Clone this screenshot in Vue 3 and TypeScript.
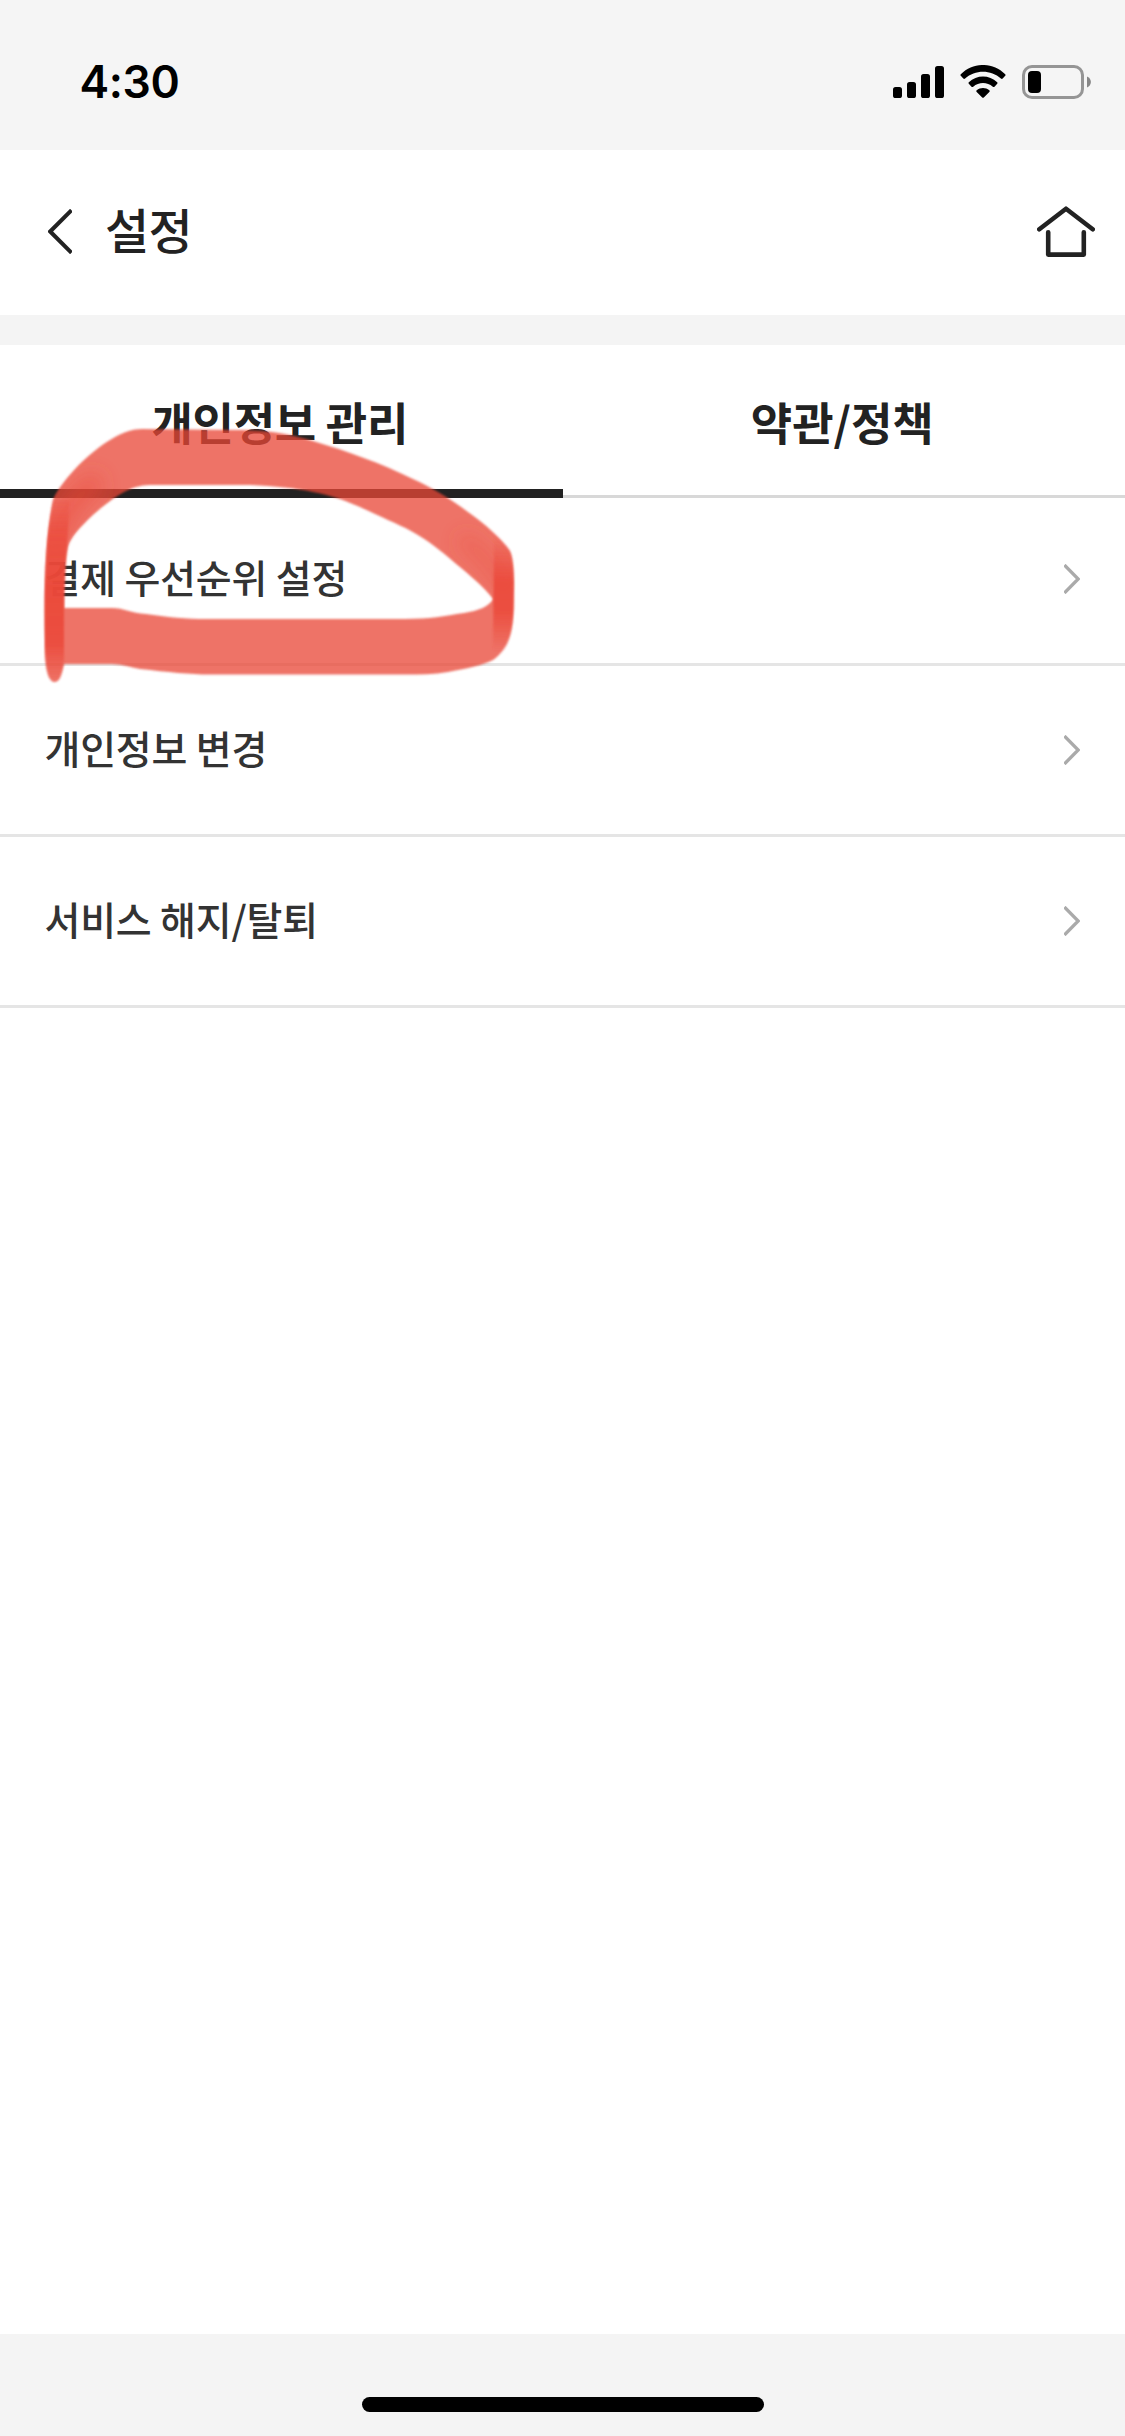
<script setup lang="ts">
import { ref } from 'vue'

interface Tab { id: number; label: string }

const tabs: Tab[] = [
  { id: 0, label: '개인정보 관리' },
  { id: 1, label: '약관/정책' },
]
const active = ref(0)
const items: string[] = ['결제 우선순위 설정', '개인정보 변경', '서비스 해지/탈퇴']

// Outline of the marker loop: outer edge, then the hole.
const loop =
  'M53 500C56 491 70 473 84 460C104 442 124 429 142 429L235 430C270 430 289 434 313 441C350 452 380 463 413 479C435 489 452 500 468 512C486 525 500 537 510 551C515 562 513.5 585 513.5 600C513.5 630 510 648 493 660C484 665 465 669 448 672C434 674.5 420 674.5 405 674.5H210C190 674.5 168 672 140 669C130 667 120 664 112 664H64C61 676 60 682 54 682C46 680 45 660 45 640C44 580 46 535 53 500Z' +
  'M64 608H112C124 608 131 613 146 614C166 617 188 619 205 619H405C430 619 444 616 464 613C478 611 490 606 493 599C484 587 472 577 455 563C441 551 429 541 411 531C396 523 383 518 360 507C331 494 300 487 250 485H150C131 485 115 496 94 514C80 527 70 538 68 547C64 562 64 586 64 608Z'
</script>

<template>
  <div class="screen">
    <div class="status">
      <span class="time">4:30</span>
      <div class="indicators">
        <svg class="signal" width="51" height="32" viewBox="0 0 51 32">
          <rect x="0" y="21" width="9" height="11" rx="2.6" />
          <rect x="14" y="16" width="9" height="16" rx="2.6" />
          <rect x="28" y="8" width="9" height="24" rx="2.6" />
          <rect x="42" y="0" width="9" height="32" rx="2.6" />
        </svg>
        <svg class="wifi" width="46" height="33" viewBox="0 0 46 33">
          <path d="M.8 9.2Q0 10 .8 10.8L3.3 13.6Q4.2 14.5 5.1 13.6C15 4.6 31 4.6 40.9 13.6Q41.8 14.5 42.7 13.6L45.2 10.8Q46 10 45.2 9.2C32.8-3.1 13.2-3.1.8 9.2Z" />
          <path d="M8.8 17.2Q8 18 8.8 18.8L11.5 21.7Q12.3 22.5 13.2 21.7C18.8 16.8 27.2 16.8 32.8 21.7Q33.7 22.5 34.5 21.7L37.2 18.8Q38 18 37.2 17.2C29.2 9.7 16.8 9.7 8.8 17.2Z" />
          <path d="M16.7 25.2Q15.8 26 16.7 26.9L22.2 32.4Q23 33.2 23.8 32.4L29.3 26.9Q30.2 26 29.3 25.2C25.7 22.3 20.3 22.3 16.7 25.2Z" />
        </svg>
        <svg class="battery" width="69" height="34" viewBox="0 0 69 34">
          <rect x="1.5" y="1.5" width="59" height="31" rx="8.5" fill="none" stroke="#959595" stroke-width="3" />
          <rect x="6" y="6" width="13" height="22" rx="4" />
          <path d="M65 11.5C70.2 13.8 70.2 20.2 65 22.5Z" fill="#878787" />
        </svg>
      </div>
    </div>

    <header class="header">
      <svg class="back" width="24" height="45" viewBox="0 0 24 45">
        <path d="M23.5 1.2L2.2 22.5L23.5 43.8" fill="none" stroke="#222" stroke-width="4" />
      </svg>
      <h1 class="title">설정</h1>
      <svg class="home" width="58" height="51" viewBox="0 0 58 51">
        <g fill="none" stroke="#222" stroke-width="4.6" stroke-linecap="round" stroke-linejoin="round">
          <path d="M2.3 23.3L29 2.7L55.7 23.3" />
          <path d="M11.2 26.2V48.6H46.8V26.2" />
        </g>
      </svg>
    </header>

    <div class="divider"></div>

    <nav class="tabs">
      <button
        v-for="tab in tabs"
        :key="tab.id"
        class="tab"
        :class="{ active: active === tab.id }"
        @click="active = tab.id"
      >
        {{ tab.label }}
      </button>
    </nav>

    <main class="list">
      <a v-for="item in items" :key="item" class="row">
        <span class="label">{{ item }}</span>
        <svg class="chevron" width="16" height="30" viewBox="0 0 16 30">
          <path d="M.4 1L14.2 15L.4 29" fill="none" stroke="#aaa" stroke-width="3.3" />
        </svg>
      </a>
    </main>

    <footer class="footer"><div class="home-bar"></div></footer>

    <!-- Hand-drawn marker loop over the first entry -->
    <svg class="marker" width="500" height="280" viewBox="30 415 500 280">
      <defs>
        <filter id="soft" x="-10%" y="-5%" width="120%" height="110%">
          <feGaussianBlur stdDeviation="1.3" />
        </filter>
        <filter id="smudge" x="-80%" y="-80%" width="260%" height="260%">
          <feGaussianBlur stdDeviation="10" />
        </filter>
        <linearGradient id="left" x1="0" y1="490" x2="0" y2="683" gradientUnits="userSpaceOnUse">
          <stop offset="0" stop-color="#eb4839" stop-opacity="0" />
          <stop offset=".25" stop-color="#eb4839" stop-opacity=".75" />
          <stop offset=".5" stop-color="#eb4839" stop-opacity=".92" />
          <stop offset=".8" stop-color="#eb4839" stop-opacity=".85" />
          <stop offset="1" stop-color="#eb4839" stop-opacity="0" />
        </linearGradient>
        <linearGradient id="right" x1="0" y1="535" x2="0" y2="652" gradientUnits="userSpaceOnUse">
          <stop offset="0" stop-color="#eb4839" stop-opacity="0" />
          <stop offset=".4" stop-color="#eb4839" stop-opacity=".85" />
          <stop offset=".65" stop-color="#eb4839" stop-opacity=".85" />
          <stop offset="1" stop-color="#eb4839" stop-opacity="0" />
        </linearGradient>
        <clipPath id="loop"><path clip-rule="evenodd" :d="loop" /></clipPath>
      </defs>
      <path filter="url(#soft)" fill="#e94838" fill-opacity=".755" fill-rule="evenodd" :d="loop" />
      <g clip-path="url(#loop)">
        <path filter="url(#smudge)" fill="none" stroke="#eb4839" stroke-opacity=".5" stroke-width="20" d="M54 545C62 515 78 492 100 480" />
        <path filter="url(#smudge)" fill="none" stroke="#eb4839" stroke-opacity=".4" stroke-width="14" d="M460 538C480 550 494 566 508 592" />
      </g>
      <path filter="url(#soft)" fill="url(#left)" d="M53 500L69 500C69 535 64 570 64 608V660C62 676 60 682 54 682C46 680 45 660 45 640C44 580 46 535 53 500Z" />
      <path filter="url(#soft)" fill="url(#right)" d="M494 535L508 548C515 560 513.5 585 513.5 600C513.5 625 511 640 503 652H493Z" />
    </svg>
  </div>
</template>

<style>
body {
  margin: 0;
  background: #fff;
}
</style>

<style scoped>
.screen {
  position: relative;
  display: flex;
  flex-direction: column;
  width: 1125px;
  height: 2436px;
  overflow: hidden;
  background: #fff;
  color: #222;
  font-family: "Noto Sans CJK KR", sans-serif;
}
.status {
  display: flex;
  justify-content: space-between;
  box-sizing: border-box;
  height: 150px;
  padding: 55px 34px 0 79.5px;
  background: #f5f5f5;
  color: #000;
}
.time {
  font: 600 44.5px/55px Inter, sans-serif;
  letter-spacing: -0.4px;
}
.indicators {
  display: flex;
  align-items: flex-start;
  padding-top: 10px;
}
.signal { margin-top: 1px; }
.wifi { margin-left: 16px; }
.battery { margin-left: 16px; }
.header {
  display: flex;
  align-items: center;
  box-sizing: border-box;
  height: 165px;
  padding: 0 30px 2px 48px;
}
.title {
  margin: 0 auto 0 33px;
  padding-bottom: 8px;
  font-size: 48px;
  font-weight: 500;
  line-height: 72px;
  letter-spacing: -0.6px;
}
.divider {
  height: 30px;
  background: #f4f4f4;
}
.tabs {
  display: flex;
  height: 153px;
}
.tab {
  flex: 1 1 0;
  box-sizing: border-box;
  padding: 4px 3px 0 0;
  border: 0;
  border-bottom: 3px solid #d8d8d8;
  background: none;
  color: #222;
  font: 700 45px/66px "Noto Sans CJK KR", sans-serif;
}
.tab.active {
  border-bottom: 9px solid #222;
  padding-top: 10px;
  letter-spacing: -0.3px;
}
.list {
  flex: 1;
  margin-top: -3px;
}
.row {
  display: flex;
  align-items: center;
  justify-content: space-between;
  height: 168px;
  padding: 0 45px 0 44.5px;
  border-bottom: 3px solid #e5e5e5;
}
.label {
  padding-bottom: 6px;
  color: #333;
  font-size: 39px;
  font-weight: 500;
  line-height: 58px;
  letter-spacing: -0.2px;
}
.footer {
  display: flex;
  justify-content: center;
  align-items: flex-start;
  box-sizing: border-box;
  height: 102px;
  padding-top: 63px;
  background: #f4f4f4;
}
.home-bar {
  width: 402px;
  height: 15px;
  border-radius: 8px;
  background: #000;
}
.marker {
  position: absolute;
  left: 30px;
  top: 415px;
}
</style>
